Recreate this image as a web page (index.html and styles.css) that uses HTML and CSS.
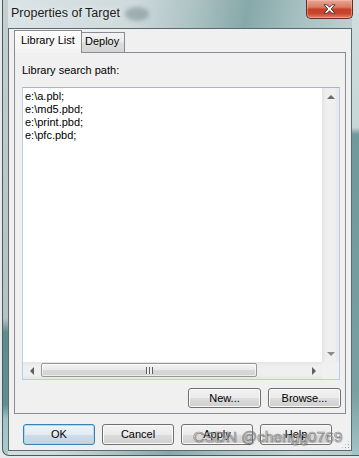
FILE: index.html
```html
<!DOCTYPE html>
<html>
<head>
<meta charset="utf-8">
<link rel="stylesheet" href="styles.css">
</head>
<body>
<div class="window">
  <div class="titlebar">
    <span class="title">Properties of Target</span>
    <span class="blob"></span>
    <div class="close">
      <svg width="13" height="10" viewBox="0 0 13 10"><path d="M1 0.8 L4.2 0.8 L6.5 3.3 L8.8 0.8 L12 0.8 L8.2 5 L12 9.2 L8.8 9.2 L6.5 6.7 L4.2 9.2 L1 9.2 L4.8 5 Z" fill="#ffffff" stroke="#3d3030" stroke-width="0.9" stroke-linejoin="round"/></svg>
    </div>
  </div>
  <div class="client">
    <div class="tabs">
      <div class="tab active">Library List</div>
      <div class="tab inactive">Deploy</div>
    </div>
    <div class="panel">
      <div class="label">Library search path:</div>
      <div class="textbox">
        <div class="content">e:\a.pbl;<br>e:\md5.pbd;<br>e:\print.pbd;<br>e:\pfc.pbd;</div>
        <div class="vscroll">
          <div class="sbtn"><span class="tri up"></span></div>
          <div class="sbtn"><span class="tri down"></span></div>
        </div>
        <div class="hscroll">
          <div class="sbtn"><span class="tri left"></span></div>
          <div class="thumb"><span class="grip"></span></div>
          <div class="track"></div>
          <div class="sbtn"><span class="tri right"></span></div>
        </div>
        <div class="corner"></div>
      </div>
      <div class="panel-buttons">
        <div class="btn">New...</div>
        <div class="btn">Browse...</div>
      </div>
    </div>
    <div class="footer">
      <div class="btn default">OK</div>
      <div class="btn">Cancel</div>
      <div class="btn">Apply</div>
      <div class="btn">Help</div>
    </div>
    <div class="sizegrip"></div>
  </div>
  <div class="watermark">CSDN @chengg0769</div>
</div>
</body>
</html>
```

FILE: styles.css
```css
body {
  margin: 0;
  width: 359px;
  height: 458px;
  overflow: hidden;
  background: #e4e9ea;
  font-family: "Liberation Sans", Arial, sans-serif;
  font-size: 11px;
  color: #000;
}

.window {
  position: relative;
  margin-left: 2px;
  width: 360px;
  height: 456px;
  box-sizing: border-box;
  border-left: 1px solid #4d5b5e;
  border-bottom: 1px solid #4d5b5e;
  border-bottom-left-radius: 7px;
  padding-left: 5px;
  display: flex;
  flex-direction: column;
  background:
    linear-gradient(to bottom, #c3cfd1 0%, #b4c2c4 70%, #5f8c8e 73%, #618f91 89%, #9ec2c5 92%, #aacbce 100%) left top / 5px 100% no-repeat,
    linear-gradient(to bottom, #d2dedf 0%, #c6d6d7 28%, #6f9a9b 29.5%, #76a0a1 86%, #a4c4c6 100%) right top / 10px 100% no-repeat,
    linear-gradient(100deg, #dbe4e6 0%, #cfdadc 30%, #a9c0c1 45%, #87a8a9 56%, #a6c0c1 68%, #c3d5d6 85%, #b7cbcc 100%);
}

.titlebar {
  height: 28px;
  flex: none;
  display: flex;
  align-items: flex-start;
}

.title {
  margin-top: 6px;
  margin-left: 3px;
  font-size: 12.5px;
  line-height: 15px;
  color: #1b1b1b;
  text-shadow: 0 0 6px rgba(255, 255, 255, 0.9);
}

.blob {
  width: 24px;
  height: 14px;
  margin-top: 7px;
  margin-left: 5px;
  border-radius: 50%;
  background: rgba(120, 138, 140, 0.55);
  filter: blur(2px);
}

.close {
  margin-left: auto;
  margin-right: 9px;
  width: 47px;
  height: 19px;
  box-sizing: border-box;
  border: 1px solid #6a2c20;
  border-top: none;
  border-radius: 0 0 5px 5px;
  background: linear-gradient(to bottom, #e6a897 0%, #d97a62 40%, #c4402a 52%, #c9452c 75%, #e0836a 100%);
  box-shadow: inset 0 0 0 1px rgba(255, 200, 190, 0.45);
  display: flex;
  align-items: center;
  justify-content: center;
}

.client {
  position: relative;
  width: 344px;
  height: 423px;
  flex: none;
  box-sizing: border-box;
  border: 1px solid #5b6b6f;
  background: #f0f0f0;
  padding-left: 5px;
  display: flex;
  flex-direction: column;
}

.tabs {
  height: 24px;
  margin-bottom: -1px;
  display: flex;
  align-items: flex-start;
  position: relative;
  z-index: 1;
}

.tab {
  box-sizing: border-box;
  border: 1px solid #898c95;
  border-bottom: none;
  line-height: 13px;
  white-space: nowrap;
}

.tab.active {
  margin-top: 1px;
  width: 68px;
  height: 23px;
  padding: 3px 0 0 6px;
  background: linear-gradient(to bottom, #fdfdfd, #f3f3f3);
  position: relative;
  z-index: 2;
}

.tab.inactive {
  margin-top: 3px;
  margin-left: -1px;
  width: 44px;
  height: 20px;
  padding: 2px 0 0 3px;
  background: linear-gradient(to bottom, #f3f3f3 0%, #ebebeb 45%, #dddddd 55%, #d4d4d4 100%);
}

.panel {
  width: 332px;
  height: 362px;
  box-sizing: border-box;
  border: 1px solid #898c95;
  background: #f0f0f0;
  padding: 11px 4px 0 7px;
  display: flex;
  flex-direction: column;
}

.label {
  line-height: 13px;
  height: 13px;
}

.textbox {
  margin-top: 10px;
  width: 318px;
  height: 293px;
  box-sizing: border-box;
  border: 1px solid #b7cfe6;
  border-top-color: #a9b5c4;
  background: #fff;
  display: grid;
  grid-template-columns: 1fr 17px;
  grid-template-rows: 1fr 17px;
}

.content {
  padding: 2px 0 0 2px;
  line-height: 13px;
  white-space: nowrap;
  overflow: hidden;
}

.vscroll {
  display: flex;
  flex-direction: column;
  justify-content: space-between;
  background: linear-gradient(to right, #e4e4e4 0%, #efefef 25%, #efefef 75%, #e6e6e6 100%);
}

.hscroll {
  display: flex;
  align-items: flex-start;
  background: linear-gradient(to bottom, #e4e4e4 0%, #efefef 25%, #efefef 75%, #e6e6e6 100%);
}

.sbtn {
  width: 17px;
  height: 17px;
  flex: none;
  display: flex;
  align-items: center;
  justify-content: center;
}

.tri {
  width: 0;
  height: 0;
}

.tri.up {
  border-left: 4px solid transparent;
  border-right: 4px solid transparent;
  border-bottom: 4px solid #6b6b6b;
}

.tri.down {
  border-left: 4px solid transparent;
  border-right: 4px solid transparent;
  border-top: 4px solid #8a8a8a;
}

.tri.left {
  border-top: 4px solid transparent;
  border-bottom: 4px solid transparent;
  border-right: 4px solid #5f5f5f;
}

.tri.right {
  border-top: 4px solid transparent;
  border-bottom: 4px solid transparent;
  border-left: 4px solid #5f5f5f;
}

.thumb {
  margin: 1px 0 0 1px;
  width: 216px;
  height: 14px;
  box-sizing: border-box;
  border: 1px solid #979797;
  border-radius: 2px;
  background: linear-gradient(to bottom, #f4f4f4 0%, #e9e9e9 48%, #d8d8d8 52%, #d2d2d2 100%);
  box-shadow: inset 0 0 0 1px rgba(255, 255, 255, 0.6);
  display: flex;
  align-items: center;
  justify-content: center;
}

.grip {
  width: 7px;
  height: 7px;
  background: repeating-linear-gradient(to right, #5e5e5e 0, #5e5e5e 1px, #f0f0f0 1px, #f0f0f0 3px);
}

.track {
  flex: 1;
}

.corner {
  background: #f0f0f0;
}

.panel-buttons {
  margin-top: 8px;
  display: flex;
  justify-content: flex-end;
  gap: 7px;
}

.btn {
  width: 73px;
  height: 20px;
  box-sizing: border-box;
  border: 1px solid #707070;
  border-radius: 3px;
  background: linear-gradient(to bottom, #f2f2f2 0%, #ebebeb 50%, #dddddd 50%, #cfcfcf 100%);
  box-shadow: inset 0 0 0 1px #fafafa;
  display: flex;
  align-items: center;
  justify-content: center;
  line-height: 13px;
}

.footer {
  margin-top: 10px;
  margin-left: 9px;
  display: flex;
  gap: 7px;
}

.footer .btn {
  width: 72px;
  height: 21px;
}

.btn.default {
  border-color: #3c7fb1;
  background: linear-gradient(to bottom, #eef4f8 0%, #e3ecf2 50%, #cfdde8 50%, #c3d4e1 100%);
  box-shadow: inset 0 0 0 1px #a8dcf6;
}

.sizegrip {
  position: absolute;
  right: 1px;
  bottom: 1px;
  width: 9px;
  height: 9px;
  background: radial-gradient(circle, #9a9a9a 0, #9a9a9a 0.8px, transparent 1px) 0 0 / 3px 3px;
  clip-path: polygon(100% 0, 100% 100%, 0 100%);
}

.watermark {
  position: absolute;
  left: 190px;
  top: 429px;
  font-family: "Liberation Sans", Arial, sans-serif;
  font-size: 15.5px;
  line-height: 15px;
  white-space: nowrap;
  color: rgba(248, 248, 248, 0.55);
  -webkit-text-stroke: 0.7px rgba(95, 95, 95, 0.75);
  text-shadow: 1px 1px 1px rgba(0, 0, 0, 0.15);
  z-index: 5;
}
```
